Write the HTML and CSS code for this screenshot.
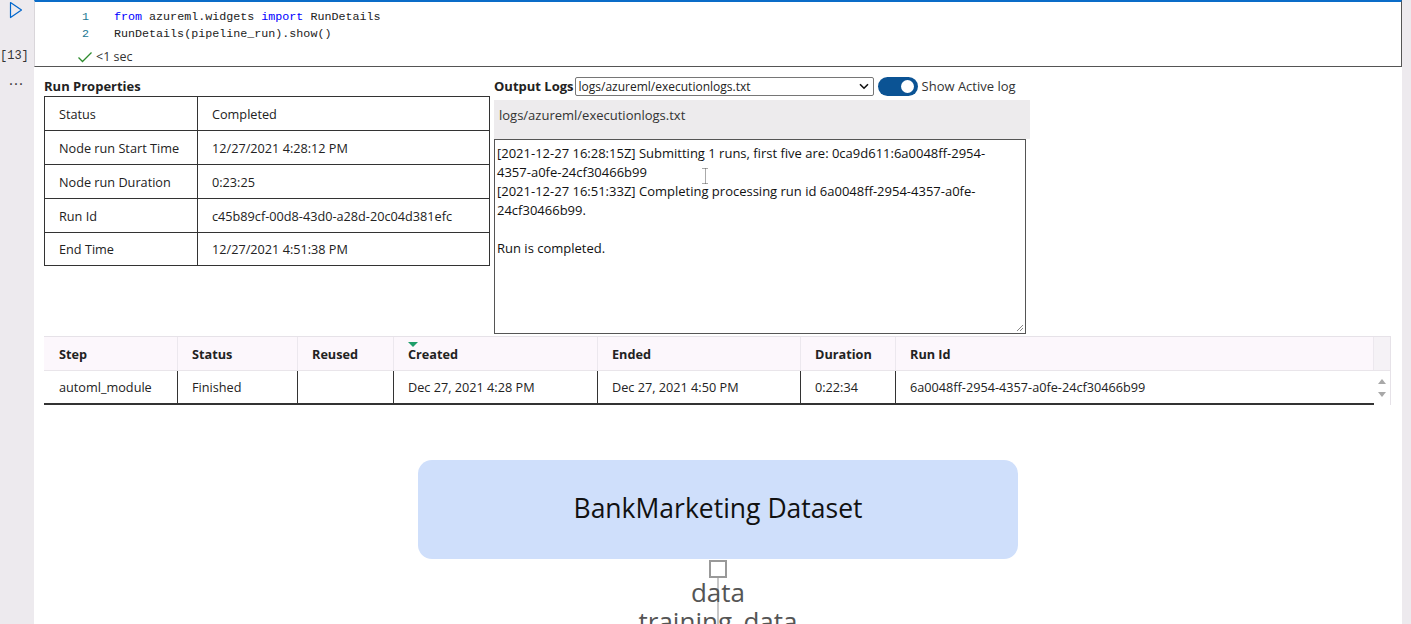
FILE: index.html
```html
<!DOCTYPE html>
<html>
<head>
<meta charset="utf-8">
<link rel="stylesheet" href="styles.css">
</head>
<body>
<div class="page">
  <div class="gutter">
    <div class="run-btn">
      <svg width="14" height="18" viewBox="0 0 14 18"><path d="M1.5 1.5 L12.5 9 L1.5 16.5 Z" fill="none" stroke="#0066cc" stroke-width="1.2" stroke-linejoin="round"/></svg>
    </div>
    <div class="exec-count">[13]</div>
    <div class="more">···</div>
  </div>
  <div class="main">
    <div class="cell">
      <div class="code">
        <div class="line"><span class="ln">1</span><span class="kw">from</span> azureml.widgets <span class="kw">import</span> RunDetails</div>
        <div class="line"><span class="ln">2</span>RunDetails(pipeline_run).show()</div>
      </div>
      <div class="status">
        <svg width="16" height="12" viewBox="0 0 16 12"><path d="M1.5 6.5 L5.5 10.5 L14.5 1.5" fill="none" stroke="#2e8b2e" stroke-width="1.3"/></svg>
        <span>&lt;1 sec</span>
      </div>
    </div>
    <div class="output">
      <div class="top-row">
        <div class="props">
          <div class="props-title">Run Properties</div>
          <table class="props-table">
            <tr><td class="k">Status</td><td>Completed</td></tr>
            <tr><td class="k">Node run Start Time</td><td>12/27/2021 4:28:12 PM</td></tr>
            <tr><td class="k">Node run Duration</td><td>0:23:25</td></tr>
            <tr><td class="k">Run Id</td><td>c45b89cf-00d8-43d0-a28d-20c04d381efc</td></tr>
            <tr><td class="k">End Time</td><td>12/27/2021 4:51:38 PM</td></tr>
          </table>
        </div>
        <div class="logs">
          <div class="logs-controls">
            <span class="logs-label">Output Logs</span>
            <div class="select"><span>logs/azureml/executionlogs.txt</span>
              <svg width="10" height="7" viewBox="0 0 10 7"><path d="M1 1.2 L5 5.2 L9 1.2" fill="none" stroke="#111" stroke-width="1.6"/></svg>
            </div>
            <div class="toggle"><div class="knob"></div></div>
            <span class="toggle-label">Show Active log</span>
          </div>
          <div class="log-file">logs/azureml/executionlogs.txt</div>
          <div class="log-text">
            <div>[2021-12-27 16:28:15Z] Submitting 1 runs, first five are: 0ca9d611:6a0048ff-2954-</div>
            <div>4357-a0fe-24cf30466b99</div>
            <div>[2021-12-27 16:51:33Z] Completing processing run id 6a0048ff-2954-4357-a0fe-</div>
            <div>24cf30466b99.</div>
            <div class="blank">&nbsp;</div>
            <div>Run is completed.</div>
            <svg class="grip" width="10" height="10" viewBox="0 0 10 10"><path d="M9 3 L3 9 M9 6 L6 9" stroke="#888" stroke-width="1"/></svg>
            <svg class="cursor" width="7" height="16" viewBox="0 0 7 16"><path d="M0.5 0.5 H6.5 M3.5 0.5 V15.5 M0.5 15.5 H6.5" fill="none" stroke="#555" stroke-width="1" stroke-dasharray="1 1"/></svg>
          </div>
        </div>
      </div>
      <div class="steps">
        <div class="steps-row head">
          <div class="c c1">Step</div>
          <div class="c c2">Status</div>
          <div class="c c3">Reused</div>
          <div class="c c4"><span class="sort"></span>Created</div>
          <div class="c c5">Ended</div>
          <div class="c c6">Duration</div>
          <div class="c c7">Run Id</div>
          <div class="c cs"></div>
        </div>
        <div class="steps-row body">
          <div class="c c1">automl_module</div>
          <div class="c c2">Finished</div>
          <div class="c c3"></div>
          <div class="c c4">Dec 27, 2021 4:28 PM</div>
          <div class="c c5">Dec 27, 2021 4:50 PM</div>
          <div class="c c6">0:22:34</div>
          <div class="c c7">6a0048ff-2954-4357-a0fe-24cf30466b99</div>
          <div class="c cs">
            <span class="arr up"></span>
            <span class="arr down"></span>
          </div>
        </div>
      </div>
      <div class="graph">
        <div class="node">BankMarketing Dataset</div>
        <div class="port"></div>
        <div class="edge"></div>
        <div class="lbl lbl1">data</div>
        <div class="lbl lbl2">training_data</div>
      </div>
    </div>
  </div>
  <div class="rgutter"></div>
</div>
</body>
</html>
```
FILE: styles.css
```css
html, body { margin: 0; padding: 0; }
body {
  width: 1411px; height: 624px; overflow: hidden;
  background: #fff;
  font-family: "Open Sans", "Noto Sans", sans-serif;
  color: #222;
}
.page { display: flex; height: 624px; }
.gutter {
  width: 34px; flex: none; background: #edeaee; position: relative;
}
.run-btn { position: absolute; left: 9px; top: 1px; }
.exec-count {
  position: absolute; left: 0; top: 49px;
  font-family: "Liberation Mono", monospace; font-size: 12px; color: #333;
}
.more { position: absolute; left: 9px; top: 73px; font-size: 15px; color: #333; letter-spacing: 1px; }
.rgutter { width: 9px; flex: none; background: #edeaee; }
.main { width: 1368px; flex: none; overflow: hidden; }

.cell {
  height: 64px;
  border-top: 2px solid #0a6cc8;
  border-right: 1px solid #555;
  border-bottom: 1px solid #555;
  border-left: 1px solid #d9d6da;
}
.code {
  padding-top: 7px;
  font-family: "Liberation Mono", monospace; font-size: 11.7px; color: #222;
}
.line { height: 17px; line-height: 17px; display: flex; white-space: pre; }
.ln { width: 54px; padding-right: 25px; text-align: right; color: #237893; }
.kw { color: #0000ff; }
.status {
  display: flex; align-items: center; gap: 3px;
  padding-left: 42px; margin-top: 5px;
  font-size: 12.5px; color: #333;
}

.output { padding-left: 10px; }
.top-row { display: flex; gap: 4px; padding-top: 8px; }
.props { width: 446px; }
.props-title { font-weight: 700; font-size: 13px; height: 21px; line-height: 22px; }
.props-table { border-collapse: collapse; width: 446px; font-size: 12.7px; }
.props-table td {
  border: 1px solid #333; height: 34px; padding: 0 0 0 14px; box-sizing: border-box;
}
.props-table tr:last-child td { height: 33px; }
.props-table td.k { width: 153px; }

.logs { width: 536px; }
.logs-controls { display: flex; align-items: center; height: 20px; margin-top: 1px; margin-bottom: 4px; }
.logs-label { font-weight: 700; font-size: 13px; }
.select {
  width: 299px; height: 19px; box-sizing: border-box; margin-left: 1px;
  border: 1px solid #767676; border-radius: 2px;
  display: flex; align-items: center; justify-content: space-between;
  padding: 0 4px 0 3px; font-size: 12px;
}
.toggle {
  width: 40px; height: 19px; border-radius: 10px; background: #0b5394;
  margin-left: 4px; position: relative;
}
.knob { position: absolute; right: 4px; top: 3px; width: 13px; height: 13px; border-radius: 50%; background: #fff; }
.toggle-label { font-size: 13px; margin-left: 4px; color: #333; }
.log-file {
  background: #edebed; height: 39px; width: 536px; box-sizing: border-box;
  padding-left: 5px; line-height: 31px; font-size: 13px; color: #333;
}
.log-text {
  width: 532px; height: 195px; box-sizing: border-box;
  border: 1px solid #555; padding: 4px 2px;
  font-size: 13px; line-height: 19px; color: #111; position: relative;
  white-space: nowrap; overflow: hidden;
}
.grip { position: absolute; right: 1px; bottom: 1px; }
.cursor { position: absolute; left: 207px; top: 28px; }

.steps {
  margin-top: 2px; width: 1346px;
  border-top: 1px solid #e6e2e8;
  border-right: 1px solid #e6e2e8;
}
.steps-row { display: flex; }
.steps-row.head { height: 33px; background: #fcf7fc; border-bottom: 1px solid #e9e5ea; font-weight: 700; }
.steps-row.body { height: 32px; border-bottom: 2px solid #333; }
.c {
  box-sizing: border-box; padding-left: 14px; font-size: 12.7px;
  display: flex; align-items: center; position: relative;
}
.head .c { border-right: 1px solid #ece8ee; }
.body .c { border-right: 1px solid #333; }
.c1 { width: 134px; padding-left: 15px; }
.c2 { width: 120px; }
.c3 { width: 96px; }
.c4 { width: 204px; }
.c5 { width: 203px; }
.c6 { width: 95px; }
.c7 { width: 478px; }
.body .c7 { border-right: none; }
.cs { width: 16px; padding: 0; flex-direction: column; justify-content: center; gap: 8px; }
.head .cs { background: #f5f2f6; border-right: none; }
.body .cs { border-right: none; background: #fff; margin-bottom: -2px; height: 34px; }
.sort {
  position: absolute; left: 14px; top: 5px;
  width: 0; height: 0; border-left: 5px solid transparent; border-right: 5px solid transparent; border-top: 5px solid #1e9e6a;
}
.arr { width: 0; height: 0; border-left: 4px solid transparent; border-right: 4px solid transparent; }
.arr.up { border-bottom: 5px solid #a8a8a8; }
.arr.down { border-top: 5px solid #a8a8a8; }

.graph { position: relative; height: 240px; }
.node {
  position: absolute; left: 374px; top: 55px; width: 600px; height: 99px;
  background: #cfdffb; border-radius: 14px;
  display: flex; align-items: center; justify-content: center;
  font-size: 26.5px; color: #111; padding-bottom: 3px; box-sizing: border-box;
}
.port {
  position: absolute; left: 665px; top: 155px; width: 18px; height: 18px;
  box-sizing: border-box; border: 2px solid #999; background: #fff;
}
.edge { position: absolute; left: 673px; top: 173px; width: 2px; height: 80px; background: #c8c8c8; }
.lbl {
  position: absolute; left: 474px; width: 400px; text-align: center;
  font-size: 26px; color: #555; line-height: 28px;
}
.lbl1 { top: 173px; }
.lbl2 { top: 202px; }
```
